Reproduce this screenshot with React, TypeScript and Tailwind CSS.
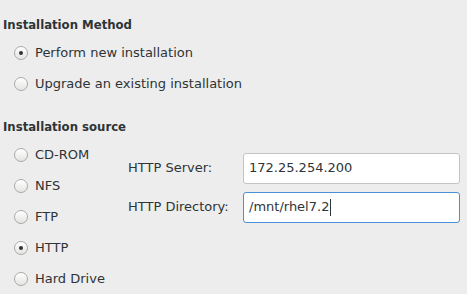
import React from 'react';

const Radio = ({ label, checked }: { label: string; checked?: boolean }) => (
  <div className="h-[31px] flex items-center gap-[7px] pl-[14px]">
    <span className="size-[14px] rounded-full border border-[#a8aaa6] bg-gradient-to-b from-[#ffffff] to-[#e4e4e2] flex items-center justify-center shadow-[inset_0_1px_0_white]">
      {checked && <span className="size-[4px] rounded-full bg-[#2e3436]" />}
    </span>
    <span>{label}</span>
  </div>
);

const Field = ({ label, value, focused }: { label: string; value: string; focused?: boolean }) => (
  <>
    <span className="flex items-center">{label}</span>
    <div
      className={`h-[31px] rounded-[3px] bg-white border flex items-center pl-[5px] ${
        focused ? 'border-[#4a90d9]' : 'border-[#c4c4c0]'
      }`}
    >
      <span>{value}</span>
      {focused && <span className="w-px h-[17px] bg-[#2e3436] ml-px" />}
    </div>
  </>
);

export default function App() {
  return (
    <div className="w-[467px] h-[294px] bg-[#ededed] text-[#2e3436] text-[13px] leading-[16px] font-['DejaVu_Sans',sans-serif] pt-[17px] overflow-hidden">
      <h3 className="font-bold pl-[3px] font-['DejaVu_Sans_Condensed','DejaVu_Sans',sans-serif]">Installation Method</h3>
      <div className="mt-[4.5px]">
        <Radio label="Perform new installation" checked />
        <Radio label="Upgrade an existing installation" />
      </div>

      <h3 className="font-bold pl-[3px] mt-[19px] font-['DejaVu_Sans_Condensed','DejaVu_Sans',sans-serif]">Installation source</h3>
      <div className="flex mt-[4.5px]">
        <div className="w-[128px]">
          <Radio label="CD-ROM" />
          <Radio label="NFS" />
          <Radio label="FTP" />
          <Radio label="HTTP" checked />
          <Radio label="Hard Drive" />
        </div>
        <div className="grid grid-cols-[115px_217px] gap-y-[8px] mt-[13.5px] h-fit">
          <Field label="HTTP Server:" value="172.25.254.200" />
          <Field label="HTTP Directory:" value="/mnt/rhel7.2" focused />
        </div>
      </div>
    </div>
  );
}
